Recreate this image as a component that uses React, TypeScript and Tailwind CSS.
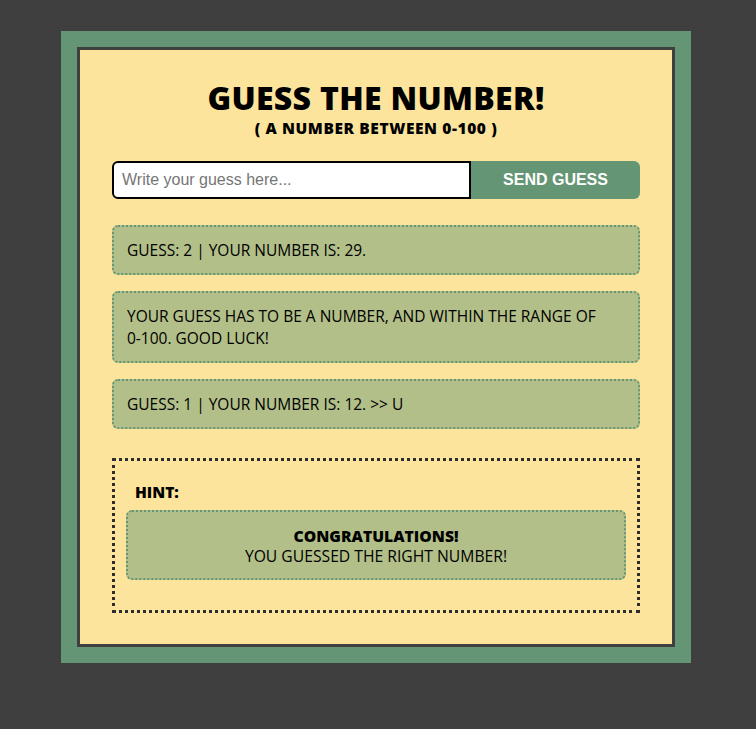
export default function App() {
  return (
    <div className="min-h-screen bg-[#3f3f3f] pt-[31px] pl-[61px]" style={{ fontFamily: '"Open Sans", "Noto Sans", sans-serif' }}>
      <div className="w-[630px] bg-[#649574] p-4">
        <div className="border-[3px] border-[#3f3f3f] bg-[#fce49d] px-[32px] pt-[29px] pb-[31px]">
          <h1 className="text-center text-[32px] font-extrabold leading-[38px] tracking-[0.3px] text-black">GUESS THE NUMBER!</h1>
          <p className="mt-[2px] text-center text-[15.5px] font-extrabold leading-[18px] tracking-[0.6px] text-black">( A NUMBER BETWEEN 0-100 )</p>

          <div className="mt-[24px] flex h-[38px]">
            <input
              type="text"
              placeholder="Write your guess here..."
              className="w-[359px] rounded-l-[6px] border-2 border-black bg-white px-2 text-[16px] text-black placeholder:text-[#767676] outline-none"
              style={{ fontFamily: '"Liberation Sans", Arial, sans-serif' }}
            />
            <button
              className="flex-1 rounded-r-[6px] bg-[#649574] text-[16px] font-bold text-white"
              style={{ fontFamily: '"Liberation Sans", Arial, sans-serif' }}
            >
              SEND GUESS
            </button>
          </div>

          <div className="mt-[26px] flex flex-col gap-[16px]">
            <Message>GUESS: 2 | YOUR NUMBER IS: 29.</Message>
            <Message>
              YOUR GUESS HAS TO BE A NUMBER, AND WITHIN THE RANGE OF <span className="whitespace-nowrap">0-100.</span> GOOD LUCK!
            </Message>
            <Message>GUESS: 1 | YOUR NUMBER IS: 12. &gt;&gt; U</Message>
          </div>

          <div className="mt-[29px] border-[3px] border-dotted border-[#2e2e2e] px-[11px] pt-[22px] pb-[30px]">
            <h2 className="ml-[9px] text-[15.5px] font-extrabold leading-[18px] text-black">HINT:</h2>
            <div className="mt-[9px] h-[70px] rounded-[6px] border-2 border-dotted border-[#649574] bg-[#b2bf88] pt-[14px] text-center text-[15.7px] leading-[20px] text-black">
              <p className="font-extrabold">CONGRATULATIONS!</p>
              <p>YOU GUESSED THE RIGHT NUMBER!</p>
            </div>
          </div>
        </div>
      </div>
    </div>
  );
}

function Message({ children }: { children: React.ReactNode }) {
  return (
    <div className="rounded-[6px] border-2 border-dotted border-[#649574] bg-[#b2bf88] px-[13px] py-[12px] text-[15.5px] leading-[22px] text-black">
      {children}
    </div>
  );
}
